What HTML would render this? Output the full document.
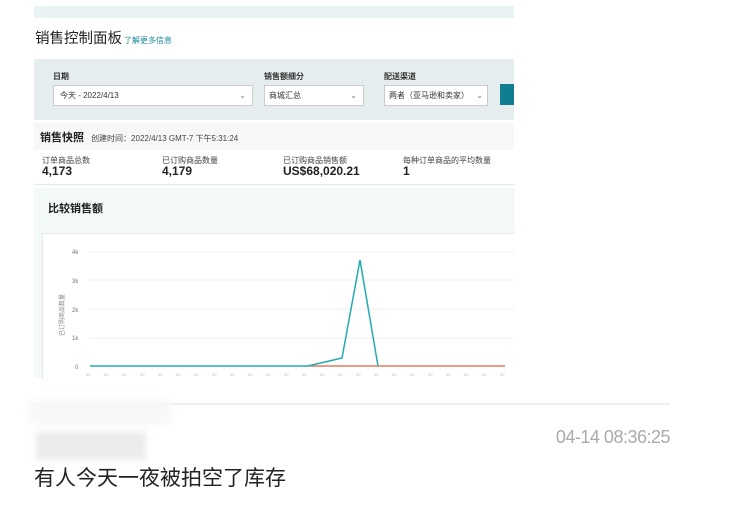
<!DOCTYPE html>
<html><head><meta charset="utf-8"><style>
body{margin:0;width:742px;height:520px;background:#fff;position:relative;overflow:hidden;font-family:"Liberation Sans","Noto Sans CJK SC",sans-serif}
.a{position:absolute}
.s{font-size:8px;color:#333}
</style></head><body>
<div class="a" style="left:34px;top:6px;width:480px;height:12px;background:#e9f3f6"></div>
<div class="a" style="left:35px;top:27px;font-size:14.5px;color:#222">销售控制面板<span style="font-size:8px;color:#1a8a9a;margin-left:2px">了解更多信息</span></div>
<div class="a" style="left:34px;top:59px;width:480px;height:61px;background:#e5edef"></div>
<div class="a s" style="left:53px;top:71px;font-weight:bold">日期</div>
<div class="a s" style="left:264px;top:71px;font-weight:bold">销售额细分</div>
<div class="a s" style="left:384px;top:71px;font-weight:bold">配送渠道</div>
<div class="a s" style="left:53px;top:85px;height:19px;background:#fff;border:1px solid #ccc;line-height:19px;padding-left:6px;width:192px">今天 - 2022/4/13<span style="float:right;margin-right:6px;color:#777">⌄</span></div>
<div class="a s" style="left:264px;top:85px;width:100px;background:#fff;border:1px solid #ccc;line-height:19px;padding-left:4px;box-sizing:border-box;height:21px">商城汇总<span style="float:right;margin-right:6px;color:#777">⌄</span></div>
<div class="a s" style="left:384px;top:85px;width:104px;height:21px;background:#fff;border:1px solid #ccc;line-height:19px;padding-left:4px;box-sizing:border-box">两者（亚马逊和卖家）<span style="float:right;margin-right:4px;color:#777">⌄</span></div>
<div class="a" style="left:500px;top:84px;width:14px;height:21px;background:#0f7f8f"></div>
<div class="a" style="left:34px;top:123px;width:480px;height:27px;background:#f6f8f8"></div>
<div class="a" style="left:40px;top:129px;font-size:11px;font-weight:bold;color:#222">销售快照 <span style="font-size:8px;font-weight:normal;color:#444;margin-left:4px">创建时间：2022/4/13 GMT-7 下午5:31:24</span></div>
<div class="a s" style="left:42px;top:155px;color:#444">订单商品总数</div>
<div class="a s" style="left:162px;top:155px;color:#444">已订购商品数量</div>
<div class="a s" style="left:283px;top:155px;color:#444">已订购商品销售额</div>
<div class="a s" style="left:403px;top:155px;color:#444">每种订单商品的平均数量</div>
<div class="a" style="left:42px;top:164px;font-size:12px;font-weight:bold;color:#222">4,173</div>
<div class="a" style="left:162px;top:164px;font-size:12px;font-weight:bold;color:#222">4,179</div>
<div class="a" style="left:283px;top:164px;font-size:12px;font-weight:bold;color:#222">US$68,020.21</div>
<div class="a" style="left:403px;top:164px;font-size:12px;font-weight:bold;color:#222">1</div>
<div class="a" style="left:34px;top:184px;width:480px;height:1px;background:#e2e8e8"></div>
<div class="a" style="left:34px;top:188px;width:480px;height:190px;background:#f3f8f9"></div>
<div class="a" style="left:48px;top:200px;font-size:11px;font-weight:bold;color:#222">比较销售额</div>
<div class="a" style="left:42px;top:233px;width:472px;height:145px;background:#fff;border-top:1px solid #e5eaea;border-left:1px solid #e5eaea"></div>
<svg class="a" style="left:0;top:0" width="742" height="400">
<g stroke="#eef0f0" stroke-width="1"><line x1="89" y1="252" x2="514" y2="252"/><line x1="89" y1="280" x2="514" y2="280"/><line x1="89" y1="309" x2="514" y2="309"/><line x1="89" y1="338" x2="514" y2="338"/></g>
<g font-size="6" fill="#777" font-family="Liberation Sans"><text x="72" y="254">4k</text><text x="72" y="283">3k</text><text x="72" y="312">2k</text><text x="72" y="340">1k</text><text x="75" y="369">0</text></g>
<text x="64" y="336" font-size="6" fill="#888" transform="rotate(-90 64 336)" font-family="Noto Sans CJK SC">已订购商品数量</text>
<polyline points="308,366 505,366" stroke="#e0603a" stroke-width="1.3" fill="none"/>
<polyline points="90,366 308,366 342,358 360,260 378,366" stroke="#22aab0" stroke-width="1.5" fill="none"/>
<g fill="#bbb" font-size="4"><text x="86" y="376">00</text><text x="104" y="376">00</text><text x="122" y="376">00</text><text x="140" y="376">00</text><text x="158" y="376">00</text><text x="176" y="376">00</text><text x="194" y="376">00</text><text x="212" y="376">00</text><text x="230" y="376">00</text><text x="248" y="376">00</text><text x="266" y="376">00</text><text x="284" y="376">00</text><text x="302" y="376">00</text><text x="320" y="376">00</text><text x="338" y="376">00</text><text x="356" y="376">00</text><text x="374" y="376">00</text><text x="392" y="376">00</text><text x="410" y="376">00</text><text x="428" y="376">00</text><text x="446" y="376">00</text><text x="464" y="376">00</text><text x="482" y="376">00</text><text x="500" y="376">00</text></g>
</svg>
<div class="a" style="left:34px;top:403px;width:636px;height:2px;background:#eeeeee"></div>
<div class="a" style="left:30px;top:400px;width:140px;height:25px;background:#f8f8f8;filter:blur(4px)"></div>
<div class="a" style="left:36px;top:432px;width:110px;height:28px;background:#ececec;filter:blur(3px)"></div>
<div class="a" style="right:72px;top:427px;font-size:18px;color:#aaa;letter-spacing:-0.5px">04-14 08:36:25</div>
<div class="a" style="left:34px;top:462px;font-size:21px;color:#222">有人今天一夜被拍空了库存</div>
</body></html>
